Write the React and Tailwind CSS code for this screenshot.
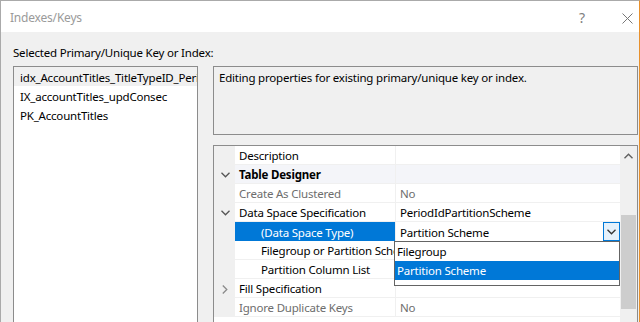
import React from "react";

const font = { fontFamily: '"Noto Sans", "Open Sans", sans-serif' };

function ChevDown({ className = "" }) {
  return (
    <svg width="9" height="6" viewBox="0 0 9 6" className={className}>
      <path d="M0.5 0.8 L4.5 4.8 L8.5 0.8" fill="none" stroke="currentColor" strokeWidth="1.3" />
    </svg>
  );
}
function ChevRight({ className = "" }) {
  return (
    <svg width="6" height="9" viewBox="0 0 6 9" className={className}>
      <path d="M0.8 0.5 L4.8 4.5 L0.8 8.5" fill="none" stroke="currentColor" strokeWidth="1.3" />
    </svg>
  );
}
function ChevUp({ className = "" }) {
  return (
    <svg width="9" height="6" viewBox="0 0 9 6" className={className}>
      <path d="M0.5 5.2 L4.5 1.2 L8.5 5.2" fill="none" stroke="currentColor" strokeWidth="1.4" />
    </svg>
  );
}

function Row({ gutter, name, value, indent, bold, gray, category }) {
  return (
    <div className={`flex h-[19px] ${category ? "bg-[#f4f5f9]" : ""}`}>
      <div className="w-[21px] shrink-0 bg-[#f0f0f0] flex items-center justify-center pl-[1px] pt-[1px]">
        {gutter === "down" && <ChevDown className="text-[#555]" />}
        {gutter === "right" && <ChevRight className="text-[#8a8a8a]" />}
      </div>
      <div
        className={`w-[160px] shrink-0 flex items-center pt-[2px] overflow-hidden whitespace-nowrap border-b border-[#f0f0f0] ${
          indent ? "pl-[26px]" : "pl-[4px]"
        } ${bold ? "font-bold" : ""} ${gray ? "text-[#6d6d6d]" : ""}`}
      >
        {name}
      </div>
      <div className="w-[1px] bg-[#f0f0f0] shrink-0" />
      <div
        className={`flex-1 flex items-center pt-[2px] pl-[4px] whitespace-nowrap border-b border-[#f0f0f0] ${
          gray ? "text-[#6d6d6d]" : ""
        }`}
      >
        {value}
      </div>
    </div>
  );
}

export default function App() {
  return (
    <div
      style={font}
      className="w-[640px] h-[322px] overflow-hidden bg-[#f0f0f0] border-l border-t border-[#aaaaaa] border-r border-r-[#e8912d] text-[11.5px] tracking-[-0.2px] text-black leading-[16px]"
    >
      <div className="h-[31px] bg-white flex items-center pt-[3px] pl-[9px] text-[#9a9a9a] text-[12px]">
        <span>Indexes/Keys</span>
        <span className="ml-auto mr-[37px] text-[#808080] text-[14px]">?</span>
        <svg width="11" height="11" viewBox="0 0 11 11" className="mr-[6px] text-[#777]">
          <path d="M0.5 0.5 L10.5 10.5 M10.5 0.5 L0.5 10.5" stroke="currentColor" strokeWidth="1" />
        </svg>
      </div>
      <div className="pl-[12px] pr-[1px] pt-[13px]">
        <div className="h-[16px] whitespace-nowrap">Selected Primary/Unique Key or Index:</div>
        <div className="flex gap-[15px] mt-[5px]">
          <div className="w-[185px] h-[300px] shrink-0 bg-white border border-[#8c8c8c]">
            <div className="h-[19px] bg-[#f0f0f0] pl-[6px] pt-[2px] flex items-center whitespace-nowrap overflow-hidden">
              idx_AccountTitles_TitleTypeID_PeriodId
            </div>
            <div className="h-[19px] pl-[6px] pt-[2px] flex items-center whitespace-nowrap">IX_accountTitles_updConsec</div>
            <div className="h-[19px] pl-[6px] pt-[2px] flex items-center whitespace-nowrap">PK_AccountTitles</div>
          </div>
          <div className="w-[425px] shrink-0 flex flex-col gap-[10px]">
            <div className="h-[69px] border border-[#8c8c8c] pl-[5px] pt-[3px] whitespace-nowrap">
              Editing properties for existing primary/unique key or index.
            </div>
            <div className="h-[200px] border border-[#8c8c8c] bg-white flex">
              <div className="flex-1 relative overflow-hidden">
                <Row name="Description" value="" />
                <Row gutter="down" name="Table Designer" bold category />
                <Row name="Create As Clustered" value="No" gray />
                <Row gutter="down" name="Data Space Specification" value="PeriodIdPartitionScheme" />
                <div className="flex h-[19px]">
                  <div className="w-[21px] shrink-0 bg-[#f0f0f0]" />
                  <div className="w-[160px] shrink-0 bg-[#0078d7] text-white flex items-center pt-[2px] pl-[26px] whitespace-nowrap">
                    (Data Space Type)
                  </div>
                  <div className="w-[1px] bg-[#f0f0f0] shrink-0" />
                  <div className="flex-1 flex items-center pl-[4px] whitespace-nowrap">
                    <span className="pt-[2px]">Partition Scheme</span>
                    <div className="ml-auto w-[17px] h-[19px] border border-[#0078d7] bg-[#e5f1fb] flex items-center justify-center">
                      <ChevDown className="text-[#333]" />
                    </div>
                  </div>
                </div>
                <Row name="Filegroup or Partition Scheme Name" value="" indent />
                <Row name="Partition Column List" value="" indent />
                <Row gutter="right" name="Fill Specification" value="" />
                <Row name="Ignore Duplicate Keys" value="No" gray />
                <div className="absolute left-[180px] top-[95px] w-[226px] h-[45px] bg-white border border-[#646464]">
                  <div className="h-[19px] pl-[2px] flex items-center">Filegroup</div>
                  <div className="h-[19px] pl-[2px] flex items-center bg-[#0078d7] text-white">Partition Scheme</div>
                </div>
              </div>
              <div className="w-[17px] shrink-0 bg-[#f0f0f0] flex flex-col items-center">
                <div className="h-[18px] flex items-center justify-center mt-[1px]">
                  <ChevUp className="text-[#606060]" />
                </div>
                <div className="mt-[50px] w-[15px] h-[94px] bg-[#cdcdcd]" />
              </div>
            </div>
          </div>
        </div>
      </div>
    </div>
  );
}
